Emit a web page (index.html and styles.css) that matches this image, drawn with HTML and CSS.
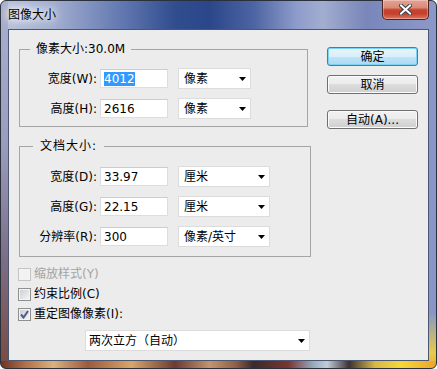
FILE: index.html
```html
<!DOCTYPE html>
<html lang="zh-CN">
<head>
    <meta charset="UTF-8">
    <meta name="viewport" content="width=device-width, initial-scale=1.0">
    <title>图像大小</title>
    <link rel="stylesheet" href="styles.css">
</head>
<body>
    <div class="window">
        <div class="titlebar">
            <span class="title">图像大小</span>
            <button class="close-btn" type="button">
                <svg width="13" height="11" viewBox="0 0 13 11">
                    <path d="M2 1.5 L11 9.5 M11 1.5 L2 9.5" stroke="#3b3f4a" stroke-width="4" stroke-linecap="square"/>
                    <path d="M2 1.5 L11 9.5 M11 1.5 L2 9.5" stroke="#fff" stroke-width="2" stroke-linecap="square"/>
                </svg>
            </button>
        </div>
        <div class="client">
            <div class="main-col">
                <fieldset class="group group-pixel">
                    <legend>像素大小:30.0M</legend>
                    <div class="row">
                        <span class="label">宽度(W):</span>
                        <span class="field"><span class="selected">4012</span></span>
                        <span class="dropdown"><span>像素</span><svg class="arrow" width="7" height="4" viewBox="0 0 7 4"><path d="M0 0 H7 L3.5 4 Z" fill="#000"/></svg></span>
                    </div>
                    <div class="row">
                        <span class="label">高度(H):</span>
                        <span class="field">2616</span>
                        <span class="dropdown"><span>像素</span><svg class="arrow" width="7" height="4" viewBox="0 0 7 4"><path d="M0 0 H7 L3.5 4 Z" fill="#000"/></svg></span>
                    </div>
                </fieldset>

                <fieldset class="group group-doc">
                    <legend>文档大小:</legend>
                    <div class="row">
                        <span class="label">宽度(D):</span>
                        <span class="field">33.97</span>
                        <span class="dropdown"><span>厘米</span><svg class="arrow" width="7" height="4" viewBox="0 0 7 4"><path d="M0 0 H7 L3.5 4 Z" fill="#000"/></svg></span>
                    </div>
                    <div class="row">
                        <span class="label">高度(G):</span>
                        <span class="field">22.15</span>
                        <span class="dropdown"><span>厘米</span><svg class="arrow" width="7" height="4" viewBox="0 0 7 4"><path d="M0 0 H7 L3.5 4 Z" fill="#000"/></svg></span>
                    </div>
                    <div class="row">
                        <span class="label">分辨率(R):</span>
                        <span class="field">300</span>
                        <span class="dropdown"><span>像素/英寸</span><svg class="arrow" width="7" height="4" viewBox="0 0 7 4"><path d="M0 0 H7 L3.5 4 Z" fill="#000"/></svg></span>
                    </div>
                </fieldset>

                <div class="checks">
                    <div class="check disabled"><span class="box"></span>缩放样式(Y)</div>
                    <div class="check"><span class="box"></span>约束比例(C)</div>
                    <div class="check"><span class="box checked"><svg width="9" height="9" viewBox="0 0 9 9"><path d="M1 4.5 L3.5 7.5 L8 1" fill="none" stroke="#4a5d8c" stroke-width="2"/></svg></span>重定图像像素(I):</div>
                </div>

                <div class="dropdown resample"><span>两次立方（自动）</span><svg class="arrow" width="7" height="4" viewBox="0 0 7 4"><path d="M0 0 H7 L3.5 4 Z" fill="#000"/></svg></div>
            </div>

            <div class="button-col">
                <button class="btn btn-default" type="button">确定</button>
                <button class="btn btn-cancel" type="button">取消</button>
                <button class="btn" type="button">自动(A)...</button>
            </div>
        </div>
    </div>
</body>
</html>
```

FILE: styles.css
```css
* {
    margin: 0;
    padding: 0;
    box-sizing: border-box;
}

body {
    background: #fff;
    font-family: "DejaVu Sans", "Noto Sans CJK SC", sans-serif;
    font-size: 12px;
    line-height: 14px;
    color: #000;
}

/* window frame */
.window {
    width: 437px;
    height: 369px;
    display: flex;
    flex-direction: column;
    padding: 0 7px 7px;
    border: 1px solid #2a303c;
    border-radius: 6px;
    background:
        linear-gradient(90deg, #6a3426 0%, #b5744a 6%, #d9b27e 12%, #9c5a3c 20%, #d8a56a 30%, #6c3a32 40%, #c49470 48%, #8e5e48 54%, #3a2a2c 58%, #7a3432 66%, #9aaec0 72%, #c2ccd6 75%, #3c3232 80%, #d8b848 86%, #f6d838 92%, #eea42a 100%) bottom / 100% 7px no-repeat,
        linear-gradient(180deg, #a9b0d0 0%, #9a9cbc 40%, #7c6e86 70%, #7a4a40 100%) left / 7px 100% no-repeat,
        linear-gradient(180deg, #8a98c8 0%, #8896c6 85%, #e8cc48 96%, #f0a830 100%) right / 7px 100% no-repeat,
        linear-gradient(90deg, #b9c2da 0%, #a3afd0 12%, #6177b0 28%, #304d8e 40%, #2b478a 48%, #4c64a2 58%, #8e9ccb 68%, #a2adcf 74%, #7886ba 84%, #8d9ac8 100%);
}

.titlebar {
    height: 28px;
    display: flex;
    justify-content: space-between;
    align-items: center;
}

.title {
    font-size: 12px;
    color: #000;
    text-shadow: 0 0 6px #fff, 0 0 10px #fff, 0 0 14px rgba(255, 255, 255, 0.8);
}

.close-btn {
    align-self: flex-start;
    margin-top: -1px;
    width: 47px;
    height: 20px;
    display: flex;
    align-items: center;
    justify-content: center;
    border: 1px solid #4f241d;
    border-top: none;
    border-radius: 0 0 5px 5px;
    background: linear-gradient(#e6a394 0%, #d98a78 40%, #c5432f 52%, #c2402d 72%, #de7660 100%);
    box-shadow: inset 0 0 0 1px rgba(255, 255, 255, 0.3);
}

/* dialog body */
.client {
    flex: 1;
    display: flex;
    padding: 12px 0 0 10px;
    border: 1px solid #4b5670;
    background: #ececec;
}

.main-col {
    width: 292px;
}

.group {
    border: 1px solid #a5a5a5;
}

.group legend {
    line-height: 14px;
}

.group-pixel {
    width: 289px;
    padding: 12px 0 7px;
}

.group-pixel legend {
    margin-left: 10px;
    padding: 0 6px;
}

.group-doc {
    width: 292px;
    margin-top: 12px;
    padding: 13px 0 9px;
}

.group-doc legend {
    margin-left: 13px;
    padding: 0 7px;
    letter-spacing: 1px;
}

.row {
    display: flex;
    align-items: center;
    height: 21px;
}

.row + .row {
    margin-top: 9px;
}

.label {
    width: 77px;
    text-align: right;
}

.field {
    width: 68px;
    height: 19px;
    margin-left: 3px;
    padding: 0 0 0 3px;
    display: flex;
    align-items: center;
    background: #fff;
    border: 1px solid #dbdde2;
    border-top-color: #c9ccd2;
}

.selected {
    background: #3399ff;
    color: #fff;
}

.dropdown {
    height: 21px;
    display: flex;
    align-items: center;
    justify-content: space-between;
    padding: 0 4px 0 5px;
    background: #fff;
    border: 1px solid #dcdcdc;
}

.row .dropdown {
    width: 73px;
    margin-left: 10px;
}

.group-doc .row .dropdown {
    width: 92px;
}

.arrow {
    flex: none;
}

/* checkboxes */
.checks {
    margin-top: 7px;
    margin-left: -1px;
}

.check {
    height: 20px;
    display: flex;
    align-items: center;
}

.check.disabled {
    color: #a3a3a3;
}

.box {
    position: relative;
    width: 13px;
    height: 13px;
    margin-right: 3px;
    border: 1px solid #8e8f8f;
    background: #f4f4f4;
}

.box::after {
    content: "";
    position: absolute;
    left: 1px;
    top: 1px;
    width: 9px;
    height: 9px;
    background: linear-gradient(135deg, #cdd0d6, #f3f3f4);
}

.check.disabled .box {
    border-color: #c4c4c4;
}

.check.disabled .box::after {
    background: #f2f2f2;
}

.box.checked svg {
    position: absolute;
    left: 1px;
    top: 1px;
    z-index: 1;
}

.resample {
    width: 225px;
    margin: 6px 0 0 66px;
    padding: 0 4px 0 3px;
}

/* buttons */
.button-col {
    margin-left: 16px;
    padding-top: 5px;
    display: flex;
    flex-direction: column;
}

.btn {
    width: 91px;
    height: 19px;
    font: inherit;
    color: #000;
    border: 1px solid #707070;
    border-radius: 3px;
    background: linear-gradient(#f2f2f2 0%, #ebebeb 50%, #dddddd 50%, #cfcfcf 100%);
    box-shadow: inset 0 0 0 1px #fbfbfb;
}

.btn-default {
    border-color: #3c7fb1;
    background: linear-gradient(#e8f5fc 0%, #d9effa 50%, #bfe5f8 50%, #a9d9f3 100%);
    box-shadow: inset 0 0 0 1px #7ad3f4;
    margin-bottom: 9px;
}

.btn-cancel {
    margin-bottom: 16px;
}
```
